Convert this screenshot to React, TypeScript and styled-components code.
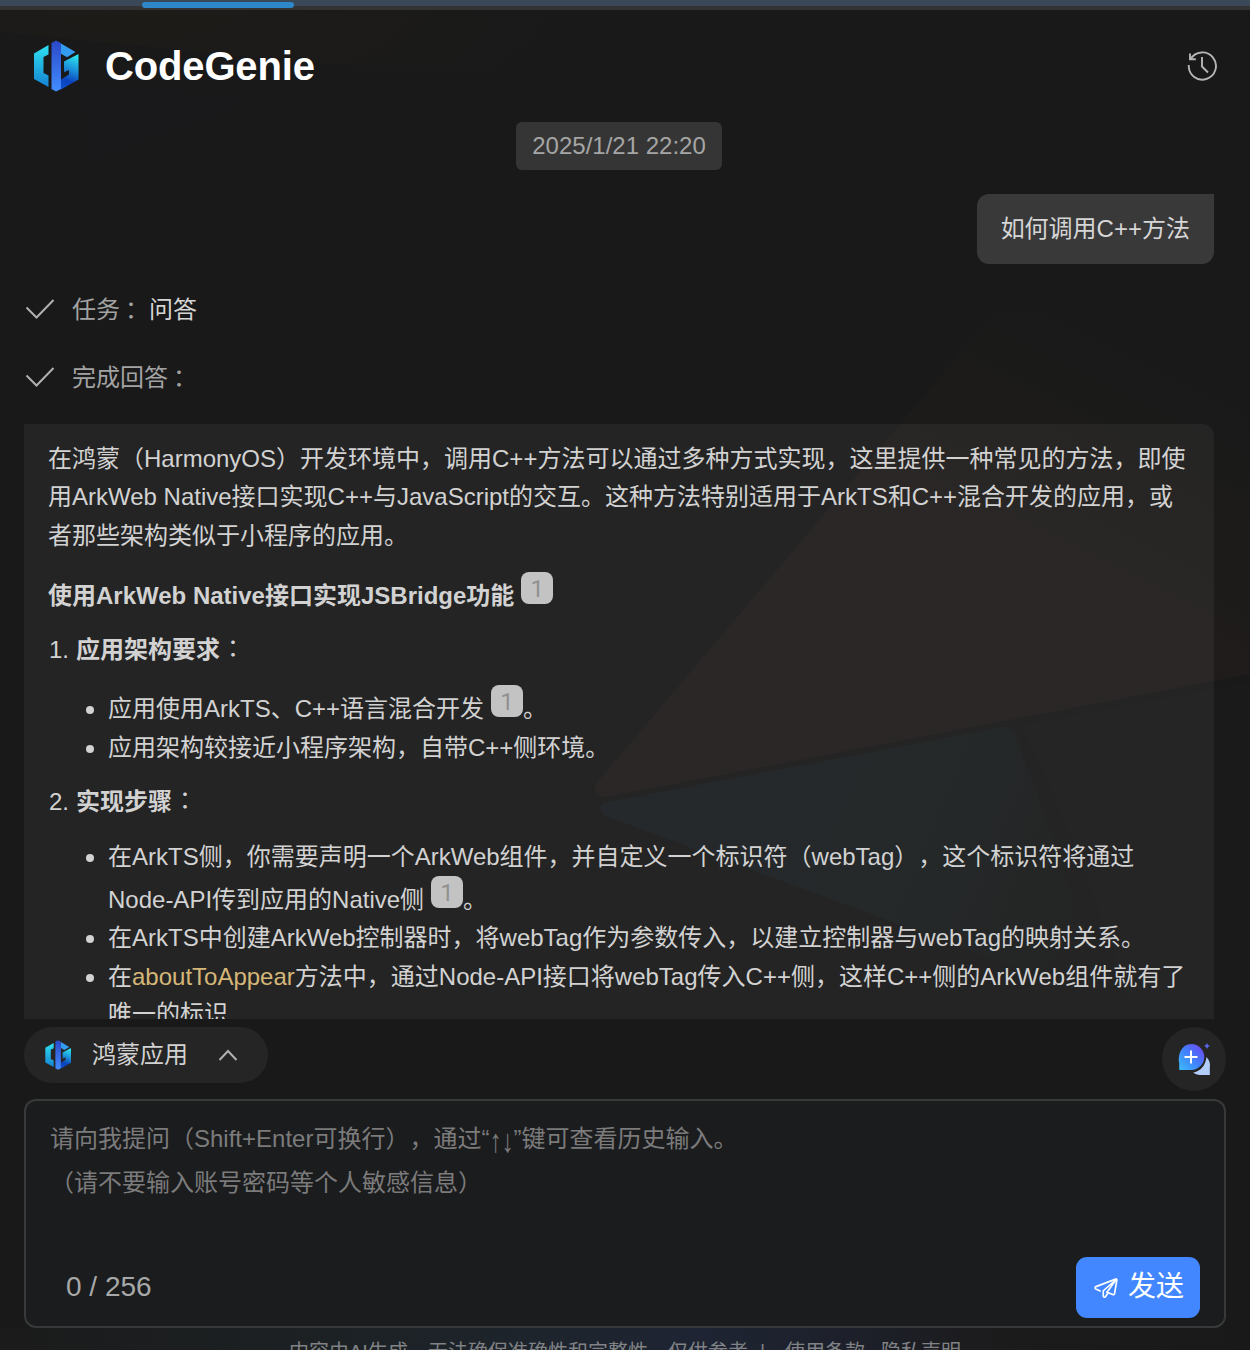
import React from 'react';
import styled, { createGlobalStyle } from 'styled-components';

const Global = createGlobalStyle`
  html, body { margin: 0; background: #191919; }
  * { box-sizing: border-box; }
`;

const Page = styled.div`
  position: relative;
  width: 1250px;
  height: 1350px;
  overflow: hidden;
  display: flex;
  flex-direction: column;
  background: #191919;
  color: #d2d2d2;
  font: 24px/38.4px "Liberation Sans", "Noto Sans CJK SC", sans-serif;
  text-spacing-trim: space-all;
  white-space: nowrap;
`;

const Backdrop = styled.svg`
  position: absolute;
  inset: 0;
`;

const TabStrip = styled.div`
  position: relative;
  flex: none;
  height: 10px;
  padding: 2px 0 0 142px;
  background: linear-gradient(#3a4857 6px, #333333 6px);
`;

const ActiveTab = styled.div`
  width: 152px;
  height: 6px;
  border-radius: 3px;
  background: #2d87c9;
`;

const Header = styled.header`
  position: relative;
  flex: none;
  display: flex;
  align-items: center;
  height: 112px;
  padding: 0 33px;
`;

const Title = styled.h1`
  flex: 1;
  margin: 0 0 0 26px;
  font-size: 40px;
  line-height: 48px;
  letter-spacing: -0.15px;
  color: #fff;
`;

const Conversation = styled.main`
  position: relative;
  flex: none;
  height: 897px;
  display: flex;
  flex-direction: column;
  padding: 0 36px 0 24px;
`;

const Timestamp = styled.time`
  align-self: center;
  height: 48px;
  padding: 0 16px;
  border-radius: 6px;
  line-height: 48px;
  background: #353535;
  color: #a5a5a5;
`;

const Question = styled.div`
  align-self: flex-end;
  margin-top: 24px;
  height: 70px;
  padding: 0 24px;
  border-radius: 12px 0 12px 12px;
  line-height: 69px;
  background: #393939;
  color: #d6d6d6;
`;

const Steps = styled.div`
  display: grid;
  grid-auto-rows: 68px;
  margin-top: 12px;
`;

const Step = styled.div`
  display: flex;
  align-items: center;
  color: #a3a3a3;
  svg { margin: -2px 17px 0 1px; }
  strong { margin-left: 5px; font-weight: 400; color: #d6d6d6; }
`;

const Colon = styled.span<{ $x: number; $y?: number }>`
  width: 24px;
  padding-left: ${p => p.$x}px;
  margin-top: ${p => p.$y ?? 0}px;
`;

const Answer = styled.section`
  margin-top: 12px;
  height: 595px;
  overflow: hidden;
  padding: 16px 24px 0;
  border-radius: 0 12px 0 0;
  background: rgba(255, 255, 255, 0.05);
`;

const Paragraph = styled.p`
  margin: 0;
`;

const Heading = styled.h2<{ $top: number }>`
  display: flex;
  margin: ${p => p.$top}px 0 0;
  font-size: 24px;
  line-height: 40px;
  height: 38px;
`;

const Numbered = styled.div<{ $top: number; $lh?: number }>`
  display: flex;
  height: 38px;
  margin-top: ${p => p.$top}px;
  line-height: ${p => p.$lh ?? 38}px;
  > span:first-child { width: 28px; padding-left: 1px; }
`;

const Bullets = styled.ul<{ $top: number }>`
  list-style: none;
  margin: ${p => p.$top}px 0 0;
  padding: 0 0 0 60px;
`;

const Bullet = styled.li`
  &::before {
    content: "";
    float: left;
    width: 8px;
    height: 8px;
    margin: 17px 0 0 -22px;
    border-radius: 50%;
    background: #d2d2d2;
  }
`;

const Row = styled.div<{ $h?: number; $lh?: number }>`
  display: flex;
  height: ${p => p.$h ?? 38.5}px;
  line-height: ${p => p.$lh ?? 40.5}px;
`;

const Cite = styled.sup<{ $top?: number }>`
  width: 32px;
  height: 32px;
  margin: ${p => p.$top ?? -4}px 0 0 7px;
  border-radius: 8px;
  background: #c3c3c3;
  color: #919191;
  font: 400 24px/34px Roboto, sans-serif;
  text-align: center;
`;

const Code = styled.span`
  color: #d5b778;
`;

const Toolbar = styled.div`
  position: relative;
  flex: none;
  display: flex;
  justify-content: space-between;
  height: 80px;
  padding: 8px 24px 0;
`;

const ModePill = styled.button`
  display: flex;
  align-items: center;
  width: 244px;
  height: 56px;
  padding: 0 0 0 20px;
  border: 0;
  border-radius: 28px;
  background: #252525;
  color: #d2d2d2;
  font: inherit;
  span { margin: 0 30px 0 20px; }
`;

const NewChat = styled.button`
  width: 64px;
  height: 64px;
  padding: 0;
  border: 0;
  border-radius: 50%;
  background: #252525;
`;

const Composer = styled.div`
  position: relative;
  flex: none;
  display: flex;
  flex-direction: column;
  justify-content: space-between;
  height: 229px;
  margin: 0 24px;
  padding: 16px 24px 8px 24px;
  border: 2px solid #383939;
  border-radius: 12px;
  background: #1b1c1e;
`;

const Placeholder = styled.div`
  line-height: 44px;
  color: #7b7b7c;
`;

const Arrows = styled.span`
  display: inline-block;
  line-height: 24px;
  transform: translateY(2px) scaleY(1.35);
`;

const ComposerFoot = styled.div`
  display: flex;
  justify-content: space-between;
  align-items: center;
  padding-left: 16px;
  font-size: 28px;
  color: #a8a8a8;
`;

const Send = styled.button`
  display: flex;
  align-items: center;
  gap: 9px;
  width: 124px;
  height: 61px;
  padding: 0 0 0 18px;
  border: 0;
  border-radius: 11px;
  background: #4287ff;
  color: #fff;
  font: inherit;
`;

const Disclaimer = styled.footer`
  position: relative;
  flex: none;
  display: flex;
  margin-left: 289px;
  padding-top: 12px;
  font-size: 20px;
  line-height: 24px;
  color: #808285;
`;

const Links = styled.span`
  display: flex;
  gap: 16px;
  margin-left: 20px;
`;

const Divider = styled.span`
  margin-left: 12px;
`;

function Logo({ id, width, height }: { id: string; width: number; height: number }) {
  return (
    <svg width={width} height={height} viewBox="0 0 46 52">
      <defs>
        <linearGradient id={id + 'c'} x1="0" y1="0" x2="0" y2="1">
          <stop offset="0" stopColor="#2fe0f0" /><stop offset="1" stopColor="#1583d2" />
        </linearGradient>
        <linearGradient id={id + 'b'} x1="0" y1="0" x2="0" y2="1">
          <stop offset="0" stopColor="#2b48c9" /><stop offset="1" stopColor="#428dff" />
        </linearGradient>
        <linearGradient id={id + 'g'} x1=".5" y1="0" x2=".3" y2="1">
          <stop offset="0" stopColor="#2be0ee" /><stop offset=".4" stopColor="#1b8fd8" />
          <stop offset=".75" stopColor="#0a42bd" /><stop offset="1" stopColor="#0f50cc" />
        </linearGradient>
      </defs>
      <path d="M15.500 5v9.500l-5 2.500v16l5 2.500v11.500L1 39V13.500z" fill={`url(#${id}c)`} />
      <path d="M28 3.500 42.500 12l-8.500 5.300-6-3.500z" fill="#349cf0" />
      <path d="M45.500 14v25.500L28 49.500V39.500l8-5V30l-5 2.300V21.500z" fill={`url(#${id}g)`} />
      <path d="M18.500 3 23 .500 28 3v46l-5 2.500-4.500-2.500z" fill={`url(#${id}b)`} />
    </svg>
  );
}

const Check = () => (
  <svg width="30" height="22" viewBox="0 0 30 22" fill="none" stroke="#b0b0b0" strokeWidth="2">
    <path d="M1.500 9.500 11.500 19.500 28.500 2" />
  </svg>
);

const HistoryIcon = () => (
  <svg width="32" height="32" viewBox="0 0 32 32" fill="none" stroke="#b5b5b5" strokeWidth="1.900">
    <path d="M5.600 9.200A13.600 13.600 0 1 1 3.800 15" />
    <path d="M5 3.500V9.200H10.800M17 7v9.500l6 6" />
  </svg>
);

const NewChatIcon = () => (
  <svg width="64" height="64" viewBox="0 0 64 64">
    <defs>
      <linearGradient id="chat" x1="0" y1="1" x2="1" y2="0">
        <stop offset="0" stopColor="#3bbcf8" /><stop offset=".5" stopColor="#4280fb" /><stop offset="1" stopColor="#7340f0" />
      </linearGradient>
    </defs>
    <path d="M44.500 30c3 3 4 7 3.300 10.500v7.500H40c-3.500 0-6.500-.500-8.800-2.500 7-1 12.500-7 13.300-15.500z" fill="#b3cdfb" />
    <path d="M29.500 17A13 13 0 1 1 29 43H17.200V36C15.500 28 19.500 17 29.500 17z" fill="url(#chat)" />
    <path d="M29 23.500v13M22.500 30h13" stroke="#fff" strokeWidth="2" />
    <path d="m45 16 1 2 2 1-2 1-1 2-1-2-2-1 2-1z" fill="#5968ef" />
  </svg>
);

const PlaneIcon = () => (
  <svg width="25" height="22" viewBox="0 0 27 24" fill="none" stroke="#fff" strokeWidth="1.800" strokeLinecap="round" strokeLinejoin="round">
    <path d="M6.500 15.200 1.800 13c-1.200-.700-1-2 .200-2.500L23.500 2.300c.800-.300 1.400.200 1.300 1L22.300 18c-.200 1.200-1 1.600-2 1.200L14 16.600" />
    <path d="M24.300 2.600 10 15v5.500c0 1.800 1.700 2 2.600.700l2.400-3.600M23.500 3.500 14 16.600" />
  </svg>
);

function BackdropArt() {
  return (
    <Backdrop width="1250" height="1350" viewBox="0 0 1250 1350">
      <defs>
        <linearGradient id="warm" gradientUnits="userSpaceOnUse" x1="800" y1="800" x2="1050" y2="300">
          <stop offset="0" stopColor="#b06848" stopOpacity=".038" /><stop offset=".6" stopColor="#b06848" stopOpacity=".038" />
          <stop offset="1" stopColor="#806020" stopOpacity="0" />
        </linearGradient>
        <linearGradient id="cool" gradientUnits="userSpaceOnUse" x1="600" y1="760" x2="1080" y2="960">
          <stop offset="0" stopColor="#3b78c0" stopOpacity=".05" /><stop offset=".6" stopColor="#2b88a0" stopOpacity=".042" />
          <stop offset="1" stopColor="#2b88a0" stopOpacity="0" />
        </linearGradient>
        <radialGradient id="amber" gradientUnits="userSpaceOnUse" cx="150" cy="10" r="420" gradientTransform="matrix(1 0 0 .3 0 7)">
          <stop offset="0" stopColor="#705010" stopOpacity=".05" /><stop offset="1" stopColor="#705010" stopOpacity="0" />
        </radialGradient>
        <linearGradient id="floor" x1="0" x2="1" y1="0" y2="0">
          <stop offset="0" stopColor="#1b1b1b" /><stop offset=".22" stopColor="#1c2022" /><stop offset=".42" stopColor="#1d242b" />
          <stop offset=".56" stopColor="#1e2433" /><stop offset=".68" stopColor="#1d202a" /><stop offset=".8" stopColor="#1c1b1c" />
          <stop offset="1" stopColor="#191919" />
        </linearGradient>
      </defs>
      <path d="M0 10H1000L560 80 300 62 0 32z" fill="url(#amber)" />
      <path d="M78 84 240 96Q244 104 232 110L92 160Q88 120 78 84z" fill="#2a2a60" opacity=".035" />
      <path d="M595 785 980 330Q995 312 1020 310L1250 290V674L606 797Q594 797 595 785z" fill="url(#warm)" />
      <path d="M604 803 1004 727Q1010 726 1014 733Q1060 850 1105 1000L606 816Q596 808 604 803z" fill="url(#cool)" />
      <path d="M1022 724 1250 682V1000H1130Q1080 850 1022 724z" fill="#404858" opacity=".03" />
      <rect y="1328" width="1250" height="22" fill="url(#floor)" />
    </Backdrop>
  );
}

export default function App() {
  return (
    <Page>
      <Global />
      <BackdropArt />
      <TabStrip><ActiveTab /></TabStrip>
      <Header>
        <Logo id="top" width={46} height={52} />
        <Title>CodeGenie</Title>
        <HistoryIcon />
      </Header>
      <Conversation>
        <Timestamp>2025/1/21 22:20</Timestamp>
        <Question>如何调用C++方法</Question>
        <Steps>
          <Step><Check />任务<Colon $x={5}>：</Colon><strong>问答</strong></Step>
          <Step><Check />完成回答<Colon $x={5}>：</Colon></Step>
        </Steps>
        <Answer>
          <Paragraph>
            在鸿蒙（HarmonyOS）开发环境中，调用C++方法可以通过多种方式实现，这里提供一种常见的方法，即使<br />
            用ArkWeb Native接口实现C++与JavaScript的交互。这种方法特别适用于ArkTS和C++混合开发的应用，或<br />
            者那些架构类似于小程序的应用。
          </Paragraph>
          <Heading $top={21}>使用ArkWeb Native接口实现JSBridge功能<Cite $top={-4}>1</Cite></Heading>
          <Numbered $top={16} $lh={40}><span>1.</span><b>应用架构要求</b><Colon $x={7} $y={-2}>：</Colon></Numbered>
          <Bullets $top={21}>
            <Bullet><Row $h={39}>应用使用ArkTS、C++语言混合开发<Cite>1</Cite>。</Row></Bullet>
            <Bullet><Row>应用架构较接近小程序架构，自带C++侧环境。</Row></Bullet>
          </Bullets>
          <Numbered $top={16}><span>2.</span><b>实现步骤</b><Colon $x={7} $y={-2}>：</Colon></Numbered>
          <Bullets $top={16}>
            <Bullet>
              <Row $h={43}>在ArkTS侧，你需要声明一个ArkWeb组件，并自定义一个标识符（webTag），这个标识符将通过</Row>
              <Row>Node-API传到应用的Native侧<Cite>1</Cite>。</Row>
            </Bullet>
            <Bullet><Row>在ArkTS中创建ArkWeb控制器时，将webTag作为参数传入，以建立控制器与webTag的映射关系。</Row></Bullet>
            <Bullet>
              <Row>在<Code>aboutToAppear</Code>方法中，通过Node-API接口将webTag传入C++侧，这样C++侧的ArkWeb组件就有了</Row>
              <Row $lh={38.5}>唯一的标识</Row>
            </Bullet>
          </Bullets>
        </Answer>
      </Conversation>
      <Toolbar>
        <ModePill>
          <Logo id="pill" width={28} height={30} />
          <span>鸿蒙应用</span>
          <svg width="20" height="12" viewBox="0 0 20 12" fill="none" stroke="#b0b0b0" strokeWidth="2"><path d="m1.500 11 8.500-9 8.500 9" /></svg>
        </ModePill>
        <NewChat><NewChatIcon /></NewChat>
      </Toolbar>
      <Composer>
        <Placeholder>
          请向我提问（Shift+Enter可换行），通过“<Arrows>↑↓</Arrows>”键可查看历史输入。<br />
          （请不要输入账号密码等个人敏感信息）
        </Placeholder>
        <ComposerFoot>
          <span>0 / 256</span>
          <Send><PlaneIcon />发送</Send>
        </ComposerFoot>
      </Composer>
      <Disclaimer>
        内容由AI生成，无法确保准确性和完整性，仅供参考
        <Divider>|</Divider>
        <Links><span>使用条款</span><span>隐私声明</span></Links>
      </Disclaimer>
    </Page>
  );
}
